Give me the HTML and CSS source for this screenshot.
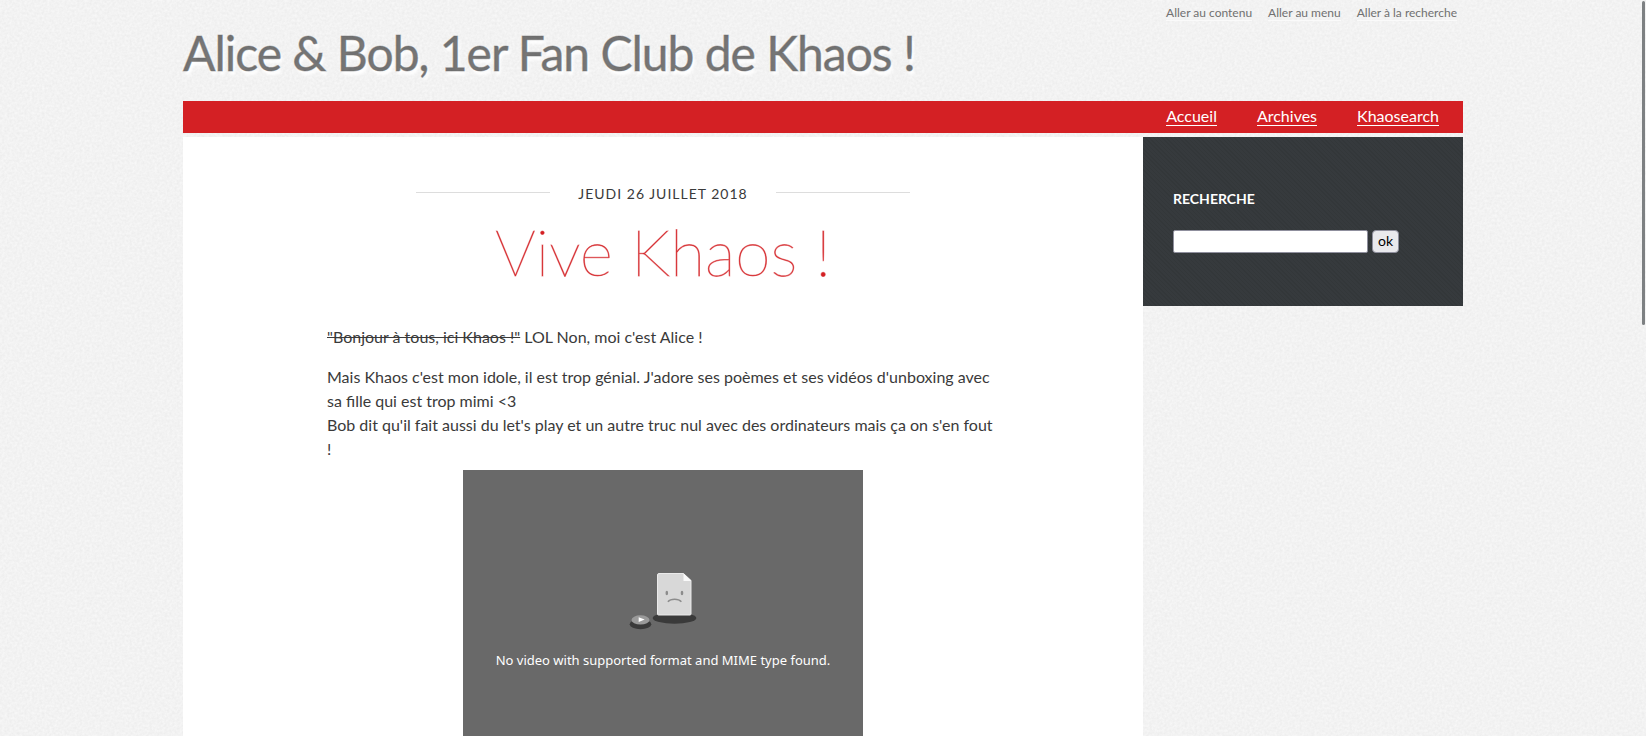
FILE: index.html
```html
<!DOCTYPE html>
<html lang="fr">
<head>
<meta charset="utf-8">
<meta name="viewport" content="width=device-width, initial-scale=1">
<title>Alice &amp; Bob, 1er Fan Club de Khaos !</title>
<link rel="stylesheet" href="styles.css">
</head>
<body>
<div class="page">
  <header class="header">
    <nav class="skip" aria-label="Accès rapide">
      <a href="#main">Aller au contenu</a>
      <a href="#menu">Aller au menu</a>
      <a href="#search">Aller à la recherche</a>
    </nav>
    <h1 class="site-title"><span>Alice &amp; Bob, 1er Fan Club de Khaos !</span></h1>
  </header>
  <nav class="menu" id="menu" aria-label="Menu">
    <a href="#accueil">Accueil</a>
    <a href="#archives">Archives</a>
    <a href="#khaosearch">Khaosearch</a>
  </nav>
  <div class="columns">
    <main class="main" id="main">
      <article class="post">
        <p class="date">jeudi 26 juillet 2018</p>
        <h2 class="post-title">Vive Khaos !</h2>
        <div class="content">
          <p><del>"Bonjour à tous, ici Khaos !"</del> LOL Non, moi c'est Alice !</p>
          <p>Mais Khaos c'est mon idole, il est trop génial. J'adore ses poèmes et ses vidéos d'unboxing avec sa fille qui est trop mimi &lt;3<br>Bob dit qu'il fait aussi du let's play et un autre truc nul avec des ordinateurs mais ça on s'en fout !</p>
        </div>
        <div class="player">
          <svg class="player-icon" width="68" height="58" viewBox="0 0 68 58" aria-hidden="true">
            <ellipse cx="45.500" cy="45" rx="21.800" ry="5.700" fill="#3a3a3a"/>
            <path d="M30 .5h24.500l7.500 7V41a1 1 0 0 1-1 1H29.500a1 1 0 0 1-1-1V2A1.500 1.500 0 0 1 30 .5z" fill="#d8d8d8" stroke="#eaeaea"/>
            <path d="M54.500.5l8 7.500h-8z" fill="#fafafa"/>
            <ellipse cx="37.800" cy="20" rx="1.300" ry="2.300" fill="#8c8c8c"/>
            <ellipse cx="53" cy="20" rx="1.300" ry="2.300" fill="#8c8c8c"/>
            <path d="M38.800 28.800c3-3.400 10.600-3.400 13.600 0" fill="none" stroke="#8c8c8c" stroke-width="1.300"/>
            <ellipse cx="11.500" cy="51.300" rx="10.800" ry="5" fill="#3a3a3a"/>
            <ellipse cx="11.500" cy="46.900" rx="9" ry="4.600" fill="#9a9a9a"/>
            <path d="M9.700 44.300l6 2.300-6 2.500z" fill="#fff"/>
          </svg>
          <p>No video with supported format and MIME type found.</p>
        </div>
      </article>
    </main>
    <aside class="sidebar" id="search">
      <h2><label for="q">Recherche</label></h2>
      <form class="search">
        <input id="q" name="q" type="text">
        <button type="submit">ok</button>
      </form>
    </aside>
  </div>
</div>
<div class="scroll-thumb"></div>
</body>
</html>
```
FILE: styles.css
```css
* {
  box-sizing: border-box;
}

html {
  height: 100%;
  overflow: hidden;
}

body {
  margin: 0;
  color: #3a3a3a;
  font: 16px/24px Lato, sans-serif;
  background: #f2f2f2 url("data:image/svg+xml,%3Csvg xmlns='http://www.w3.org/2000/svg' width='200' height='200'%3E%3Cfilter id='n' color-interpolation-filters='sRGB'%3E%3CfeTurbulence type='fractalNoise' baseFrequency='.4' numOctaves='2' stitchTiles='stitch'/%3E%3CfeColorMatrix values='.06 0 0 0 .92 .06 0 0 0 .92 .06 0 0 0 .92 0 0 0 0 1'/%3E%3C/filter%3E%3Crect width='200' height='200' filter='url(%23n)'/%3E%3C/svg%3E");
}

p,
h1,
h2 {
  margin: 0;
}

.page {
  max-width: 1280px;
  margin: 0 auto;
}

.skip {
  display: flex;
  justify-content: flex-end;
  gap: 16px;
  padding: 6px 6px 0 0;
  font-size: 12px;
  line-height: 14px;
}

.skip a {
  color: #707070;
  text-decoration: none;
  border-bottom: 1px solid #fafafa;
}

.site-title {
  padding: 4px 0 20px;
  font-size: 48px;
  font-weight: 400;
  line-height: 56px;
  letter-spacing: -1px;
}

.site-title span {
  color: rgba(0, 0, 0, .53);
  text-shadow: 2px 4px 3px #fff;
  -webkit-text-stroke: 1px rgba(102, 102, 102, .4);
}

.menu {
  display: flex;
  justify-content: flex-end;
  gap: 40px;
  padding: 5px 24px 7px;
  background: #d42024;
}

.menu a {
  color: #fff;
  line-height: 19px;
  text-decoration: none;
  border-bottom: 1px solid #fff;
}

.columns {
  display: grid;
  grid-template-columns: 3fr 1fr;
  align-items: start;
  margin-top: 4px;
}

.main {
  min-height: 100vh;
  padding: 45px 15% 48px;
  background: #fff;
}

.date {
  display: flex;
  justify-content: center;
  align-items: center;
  gap: 28px;
  font-size: 14px;
  letter-spacing: 1px;
  text-transform: uppercase;
}

.date::before,
.date::after {
  content: "";
  width: 134px;
  height: 3px;
  border-top: 1px solid #ddd;
}

.post-title {
  margin: 10px 0 37px;
  color: #d42024;
  font-size: 64px;
  font-weight: 200;
  line-height: 72px;
  text-align: center;
  -webkit-text-stroke: 1px rgba(212, 32, 36, .5);
}

.content {
  display: grid;
  gap: 16px;
  margin-bottom: 9px;
}

.player {
  display: flex;
  flex-direction: column;
  align-items: center;
  gap: 19px;
  max-width: 400px;
  height: 300px;
  margin: 0 auto;
  padding-top: 103px;
  color: #fff;
  font: 13px/20px "Noto Sans", sans-serif;
  background: #696969;
}

.sidebar {
  padding: 50px 30px 53px;
  color: #fff;
  background: #363a3d repeating-linear-gradient(45deg, rgba(0, 0, 0, .06) 0 1px, transparent 1px 3px);
}

.sidebar h2 {
  font-size: 14px;
  font-weight: 700;
  text-transform: uppercase;
}

.search {
  display: flex;
  gap: 4px;
  margin-top: 19px;
}

.search input,
.search button {
  height: 23px;
  border: 1px solid #8f8f9d;
  font: 14px/19px Lato, sans-serif;
}

.search input {
  flex: 0 1 195px;
  min-width: 0;
  padding: 1px 2px;
  border-radius: 2px;
  background: #fff;
}

.search button {
  padding: 0 5px 2px;
  border-radius: 4px;
  color: #000;
  background: #e9e9ed;
}

.scroll-thumb {
  position: fixed;
  top: 1px;
  right: 1px;
  width: 3px;
  height: 44vh;
  border-radius: 2px;
  background: #7d8082;
}
```
